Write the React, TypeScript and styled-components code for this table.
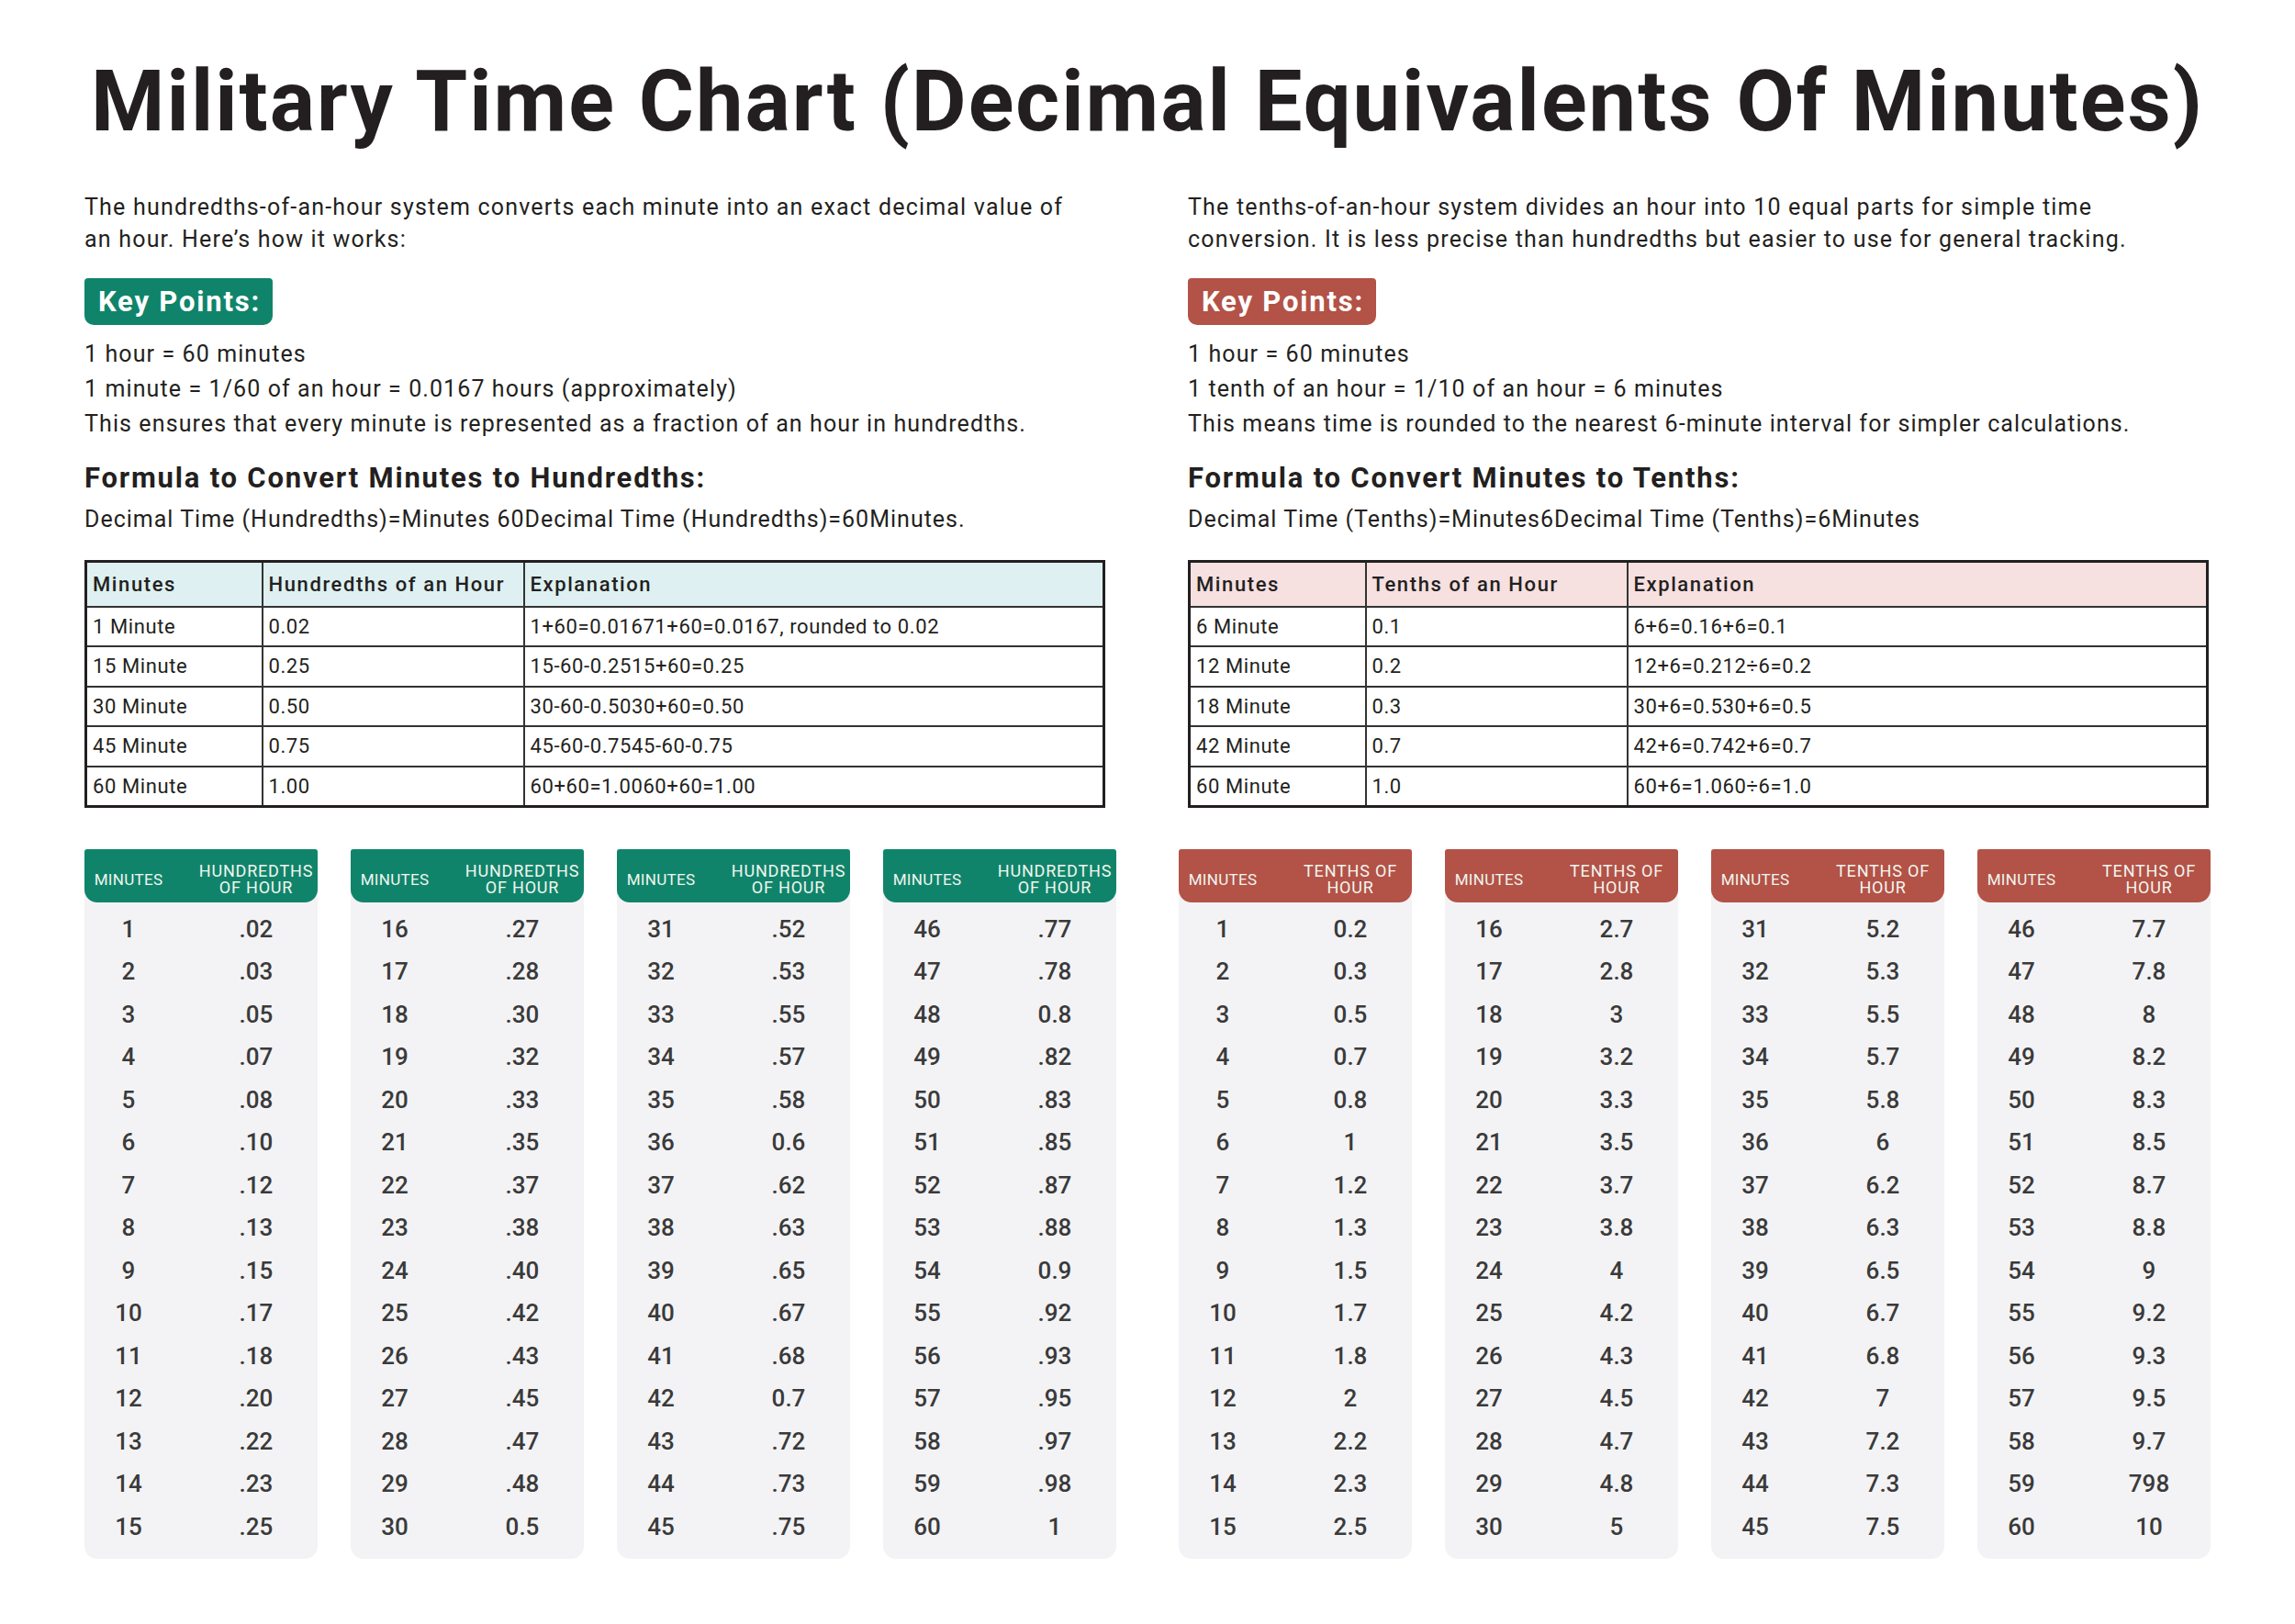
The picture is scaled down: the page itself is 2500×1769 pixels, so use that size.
import React from "react";
import styled, { createGlobalStyle } from "styled-components";

const GREEN = "#10846b";
const RED = "#b35247";

const GlobalStyle = createGlobalStyle`
  html, body {
    margin: 0;
    padding: 0;
    background: #ffffff;
  }
  body {
    font-family: Roboto, "Liberation Sans", Arial, sans-serif;
    color: #231f20;
  }
  * {
    box-sizing: border-box;
  }
`;

type Tone = { tone: "green" | "red" };

const hundredths: [number, string][] = [
  [1, ".02"], [2, ".03"], [3, ".05"], [4, ".07"], [5, ".08"], [6, ".10"], [7, ".12"], [8, ".13"],
  [9, ".15"], [10, ".17"], [11, ".18"], [12, ".20"], [13, ".22"], [14, ".23"], [15, ".25"],
  [16, ".27"], [17, ".28"], [18, ".30"], [19, ".32"], [20, ".33"], [21, ".35"], [22, ".37"],
  [23, ".38"], [24, ".40"], [25, ".42"], [26, ".43"], [27, ".45"], [28, ".47"], [29, ".48"],
  [30, "0.5"], [31, ".52"], [32, ".53"], [33, ".55"], [34, ".57"], [35, ".58"], [36, "0.6"],
  [37, ".62"], [38, ".63"], [39, ".65"], [40, ".67"], [41, ".68"], [42, "0.7"], [43, ".72"],
  [44, ".73"], [45, ".75"], [46, ".77"], [47, ".78"], [48, "0.8"], [49, ".82"], [50, ".83"],
  [51, ".85"], [52, ".87"], [53, ".88"], [54, "0.9"], [55, ".92"], [56, ".93"], [57, ".95"],
  [58, ".97"], [59, ".98"], [60, "1"],
];

const tenths: [number, string][] = [
  [1, "0.2"], [2, "0.3"], [3, "0.5"], [4, "0.7"], [5, "0.8"], [6, "1"], [7, "1.2"], [8, "1.3"],
  [9, "1.5"], [10, "1.7"], [11, "1.8"], [12, "2"], [13, "2.2"], [14, "2.3"], [15, "2.5"],
  [16, "2.7"], [17, "2.8"], [18, "3"], [19, "3.2"], [20, "3.3"], [21, "3.5"], [22, "3.7"],
  [23, "3.8"], [24, "4"], [25, "4.2"], [26, "4.3"], [27, "4.5"], [28, "4.7"], [29, "4.8"],
  [30, "5"], [31, "5.2"], [32, "5.3"], [33, "5.5"], [34, "5.7"], [35, "5.8"], [36, "6"],
  [37, "6.2"], [38, "6.3"], [39, "6.5"], [40, "6.7"], [41, "6.8"], [42, "7"], [43, "7.2"],
  [44, "7.3"], [45, "7.5"], [46, "7.7"], [47, "7.8"], [48, "8"], [49, "8.2"], [50, "8.3"],
  [51, "8.5"], [52, "8.7"], [53, "8.8"], [54, "9"], [55, "9.2"], [56, "9.3"], [57, "9.5"],
  [58, "9.7"], [59, "798"], [60, "10"],
];

const leftRows = [
  ["1 Minute", "0.02", "1+60=0.01671+60=0.0167, rounded to 0.02"],
  ["15 Minute", "0.25", "15-60-0.2515+60=0.25"],
  ["30 Minute", "0.50", "30-60-0.5030+60=0.50"],
  ["45 Minute", "0.75", "45-60-0.7545-60-0.75"],
  ["60 Minute", "1.00", "60+60=1.0060+60=1.00"],
];

const rightRows = [
  ["6 Minute", "0.1", "6+6=0.16+6=0.1"],
  ["12 Minute", "0.2", "12+6=0.212÷6=0.2"],
  ["18 Minute", "0.3", "30+6=0.530+6=0.5"],
  ["42 Minute", "0.7", "42+6=0.742+6=0.7"],
  ["60 Minute", "1.0", "60+6=1.060÷6=1.0"],
];

const App = () => {
  // 60분을 15개씩 4장의 카드로 나눔
  const chunk = (list: [number, string][]) =>
    [0, 1, 2, 3].map((i) => list.slice(i * 15, i * 15 + 15));

  return (
    <Page>
      <GlobalStyle />
      <Title>Military Time Chart (Decimal Equivalents Of Minutes)</Title>

      <Columns>
        <Column>
          <Intro>
            The hundredths-of-an-hour system converts each minute into an exact decimal value of
            <br />
            an hour. Here’s how it works:
          </Intro>
          <Badge tone="green">Key Points:</Badge>
          <Points>
            <li>1 hour = 60 minutes</li>
            <li>1 minute = 1/60 of an hour = 0.0167 hours (approximately)</li>
            <li>This ensures that every minute is represented as a fraction of an hour in hundredths.</li>
          </Points>
          <Heading>Formula to Convert Minutes to Hundredths:</Heading>
          <Formula>Decimal Time (Hundredths)=Minutes 60Decimal Time (Hundredths)=60Minutes.</Formula>
          <ExampleTable tone="green">
            <thead>
              <tr>
                <th>Minutes</th>
                <th>Hundredths of an Hour</th>
                <th>Explanation</th>
              </tr>
            </thead>
            <tbody>
              {leftRows.map((r) => (
                <tr key={r[0]}>
                  <td>{r[0]}</td>
                  <td>{r[1]}</td>
                  <td>{r[2]}</td>
                </tr>
              ))}
            </tbody>
          </ExampleTable>
        </Column>

        <Column>
          <Intro>
            The tenths-of-an-hour system divides an hour into 10 equal parts for simple time
            <br />
            conversion. It is less precise than hundredths but easier to use for general tracking.
          </Intro>
          <Badge tone="red">Key Points:</Badge>
          <Points>
            <li>1 hour = 60 minutes</li>
            <li>1 tenth of an hour = 1/10 of an hour = 6 minutes</li>
            <li>This means time is rounded to the nearest 6-minute interval for simpler calculations.</li>
          </Points>
          <Heading>Formula to Convert Minutes to Tenths:</Heading>
          <Formula>Decimal Time (Tenths)=Minutes6Decimal Time (Tenths)=6Minutes</Formula>
          <ExampleTable tone="red">
            <thead>
              <tr>
                <th>Minutes</th>
                <th>Tenths of an Hour</th>
                <th>Explanation</th>
              </tr>
            </thead>
            <tbody>
              {rightRows.map((r) => (
                <tr key={r[0]}>
                  <td>{r[0]}</td>
                  <td>{r[1]}</td>
                  <td>{r[2]}</td>
                </tr>
              ))}
            </tbody>
          </ExampleTable>
        </Column>
      </Columns>

      <Charts>
        <CardGroup>
          {chunk(hundredths).map((group, i) => (
            <Card key={`h-${i}`}>
              <CardHead tone="green">
                <HeadLabel>MINUTES</HeadLabel>
                <HeadValue>
                  HUNDREDTHS
                  <br />
                  OF HOUR
                </HeadValue>
              </CardHead>
              <CardBody>
                {group.map(([m, v]) => (
                  <Row key={`h-${m}`}>
                    <span>{m}</span>
                    <span>{v}</span>
                  </Row>
                ))}
              </CardBody>
            </Card>
          ))}
        </CardGroup>
        <CardGroup>
          {chunk(tenths).map((group, i) => (
            <Card key={`t-${i}`}>
              <CardHead tone="red">
                <HeadLabel>MINUTES</HeadLabel>
                <HeadValue>
                  TENTHS OF
                  <br />
                  HOUR
                </HeadValue>
              </CardHead>
              <CardBody>
                {group.map(([m, v]) => (
                  <Row key={`t-${m}`}>
                    <span>{m}</span>
                    <span>{v}</span>
                  </Row>
                ))}
              </CardBody>
            </Card>
          ))}
        </CardGroup>
      </Charts>
    </Page>
  );
};

const Page = styled.div`
  width: 2500px;
  min-height: 1769px;
  padding: 65px 92px 0 92px;
`;

const Title = styled.h1`
  margin: 0;
  font-family: Roboto, "Liberation Sans", sans-serif;
  font-weight: 700;
  font-size: 92px;
  line-height: 92px;
  letter-spacing: 2px;
  text-align: center;
  color: #231f20;
  white-space: nowrap;
`;

const Columns = styled.div`
  display: grid;
  grid-template-columns: 1112px 1112px;
  column-gap: 90px;
  margin-top: 51px;
`;

const Column = styled.div`
  display: flex;
  flex-direction: column;
  align-items: flex-start;
`;

const Intro = styled.p`
  margin: 0;
  font-size: 25px;
  line-height: 35px;
  letter-spacing: 1.2px;
  white-space: nowrap;
`;

const Badge = styled.div<Tone>`
  margin-top: 25px;
  height: 51px;
  padding: 0 13px 0 15px;
  display: flex;
  align-items: center;
  border-radius: 4px 4px 10px 10px;
  background: ${({ tone }) => (tone === "green" ? GREEN : RED)};
  color: #ffffff;
  font-size: 31px;
  font-weight: 700;
  letter-spacing: 1.8px;
`;

const Points = styled.ul`
  margin: 13px 0 0;
  padding: 0;
  list-style: none;

  li {
    font-size: 25px;
    line-height: 38px;
    letter-spacing: 1.1px;
    white-space: nowrap;
  }
`;

const Heading = styled.h2`
  margin: 20px 0 0;
  font-size: 31px;
  line-height: 40px;
  font-weight: 700;
  letter-spacing: 1.8px;
`;

const Formula = styled.p`
  margin: 7px 0 0;
  font-size: 25px;
  line-height: 36px;
  letter-spacing: 1px;
  white-space: nowrap;
`;

const ExampleTable = styled.table<Tone>`
  margin-top: 26px;
  width: 100%;
  border-collapse: collapse;
  border: 3px solid #231f20;
  font-size: 22px;
  letter-spacing: 0.6px;

  th,
  td {
    border: 2px solid #333333;
    padding: 0 6px;
    text-align: left;
    height: 43.5px;
  }
  th {
    height: 49px;
    font-weight: 500;
    letter-spacing: 1.6px;
    background: ${({ tone }) => (tone === "green" ? "#def0f1" : "#f6e0e0")};
  }
  th:nth-child(1) {
    width: 192px;
  }
  th:nth-child(2) {
    width: 285px;
  }
`;

const Charts = styled.div`
  display: grid;
  grid-template-columns: 1124px 1124px;
  column-gap: 68px;
  margin-top: 45px;
`;

const CardGroup = styled.div`
  display: grid;
  grid-template-columns: repeat(4, 254px);
  column-gap: 36px;
`;

const Card = styled.div`
  display: flex;
  flex-direction: column;
  border-radius: 0 0 14px 14px;
  background: #f3f3f5;
`;

const CardHead = styled.div<Tone>`
  height: 58px;
  padding-top: 8px;
  display: grid;
  grid-template-columns: 96px 134px;
  column-gap: 24px;
  align-items: center;
  border-radius: 3px 3px 14px 14px;
  background: ${({ tone }) => (tone === "green" ? GREEN : RED)};
  color: #f1f6ef;
  text-align: center;
`;

const HeadLabel = styled.span`
  font-size: 17px;
  line-height: 18px;
  letter-spacing: 0.3px;
`;

const HeadValue = styled.span`
  font-size: 18px;
  line-height: 18px;
  letter-spacing: 0.8px;
`;

const CardBody = styled.div`
  padding: 6px 0 12px;
`;

const Row = styled.div`
  display: grid;
  grid-template-columns: 96px 134px;
  column-gap: 24px;
  height: 46.5px;
  align-items: center;
  text-align: center;
  font-size: 26px;
  font-weight: 500;
  color: #3a3a3a;
`;

export default App;
